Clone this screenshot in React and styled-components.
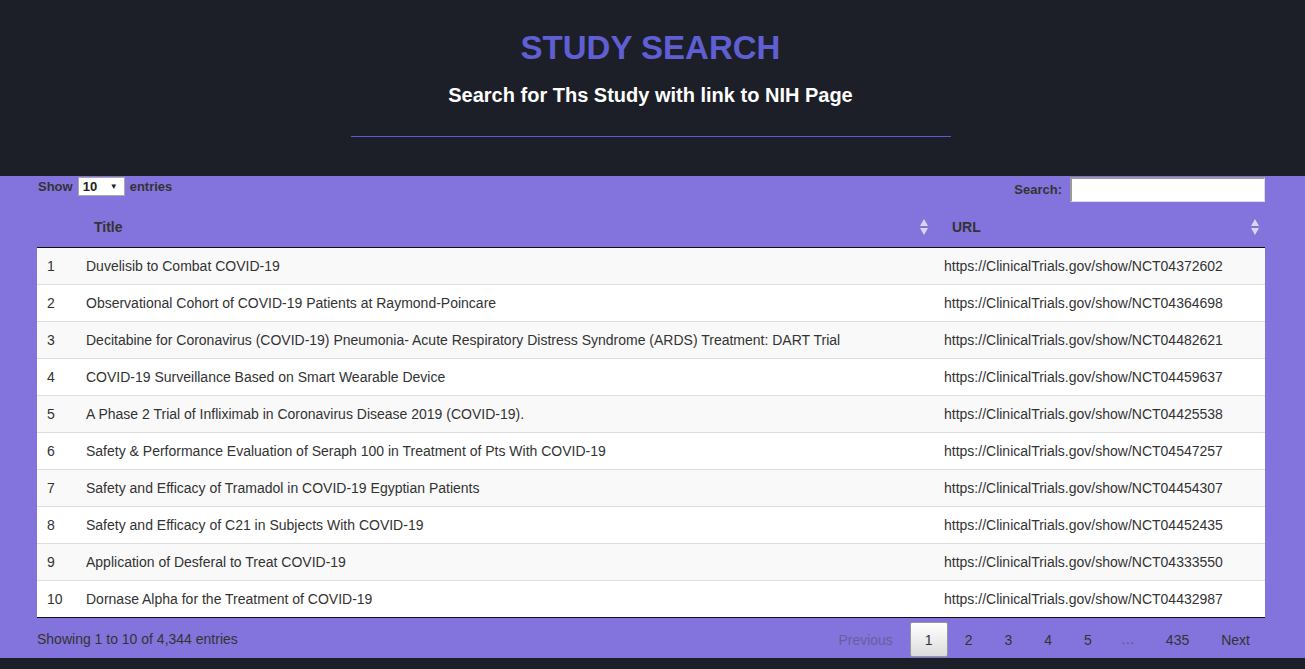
import React from 'react';
import styled, { createGlobalStyle } from 'styled-components';

const rows = [
  ['Duvelisib to Combat COVID-19', 'NCT04372602'],
  ['Observational Cohort of COVID-19 Patients at Raymond-Poincare', 'NCT04364698'],
  ['Decitabine for Coronavirus (COVID-19) Pneumonia- Acute Respiratory Distress Syndrome (ARDS) Treatment: DART Trial', 'NCT04482621'],
  ['COVID-19 Surveillance Based on Smart Wearable Device', 'NCT04459637'],
  ['A Phase 2 Trial of Infliximab in Coronavirus Disease 2019 (COVID-19).', 'NCT04425538'],
  ['Safety & Performance Evaluation of Seraph 100 in Treatment of Pts With COVID-19', 'NCT04547257'],
  ['Safety and Efficacy of Tramadol in COVID-19 Egyptian Patients', 'NCT04454307'],
  ['Safety and Efficacy of C21 in Subjects With COVID-19', 'NCT04452435'],
  ['Application of Desferal to Treat COVID-19', 'NCT04333550'],
  ['Dornase Alpha for the Treatment of COVID-19', 'NCT04432987'],
];

const pages = ['1', '2', '3', '4', '5'];

function SortIcon() {
  return (
    <SortSvg width="8" height="16" viewBox="0 0 8 16">
      <path d="M4 0 L8 7 L0 7 Z" fill="rgba(235,230,250,0.85)" />
      <path d="M4 16 L8 9 L0 9 Z" fill="rgba(235,230,250,0.85)" />
    </SortSvg>
  );
}

export default function App() {
  return (
    <>
      <GlobalStyle />
      <Header>
        <Title>STUDY SEARCH</Title>
        <Subtitle>Search for Ths Study with link to NIH Page</Subtitle>
        <Rule />
      </Header>
      <Main>
        <Controls>
          <Length>
            Show
            <FakeSelect>
              <span>10</span>
              <Caret>▼</Caret>
            </FakeSelect>
            entries
          </Length>
          <Filter>
            Search:
            <SearchInput type="text" />
          </Filter>
        </Controls>
        <Table>
          <colgroup>
            <col style={{ width: 39 }} />
            <col style={{ width: 858 }} />
            <col style={{ width: 331 }} />
          </colgroup>
          <thead>
            <tr>
              <Th></Th>
              <Th>Title<SortIcon /></Th>
              <Th>URL<SortIcon /></Th>
            </tr>
          </thead>
          <tbody>
            {rows.map((r, i) => (
              <Tr key={i} $odd={i % 2 === 0}>
                <Td>{i + 1}</Td>
                <Td>{r[0]}</Td>
                <Td>https://ClinicalTrials.gov/show/{r[1]}</Td>
              </Tr>
            ))}
          </tbody>
        </Table>
        <Footer>
          <Info>Showing 1 to 10 of 4,344 entries</Info>
          <Paginate>
            <PageButton $disabled>Previous</PageButton>
            {pages.map((p) => (
              <PageButton key={p} $current={p === '1'}>{p}</PageButton>
            ))}
            <Ellipsis>…</Ellipsis>
            <PageButton>435</PageButton>
            <PageButton>Next</PageButton>
          </Paginate>
        </Footer>
      </Main>
    </>
  );
}

const GlobalStyle = createGlobalStyle`
  html, body {
    margin: 0;
    padding: 0;
    background: #1d1f28;
    font-family: "Liberation Sans", Arial, sans-serif;
  }
`;

const Header = styled.header`
  height: 176px;
  box-sizing: border-box;
  padding: 29px 4px 0 0;
  background: #1d1f28;
  display: flex;
  flex-direction: column;
  align-items: center;
`;

const Title = styled.h1`
  margin: 0;
  font-size: 33px;
  line-height: 38px;
  font-weight: 700;
  color: #5f5fd3;
`;

const Subtitle = styled.h3`
  margin: 17px 0 0;
  font-size: 20px;
  line-height: 23px;
  font-weight: 700;
  color: #ffffff;
`;

const Rule = styled.div`
  margin-top: 29px;
  width: 600px;
  height: 1px;
  background: #5b5bd6;
`;

const Main = styled.main`
  background: #8373dc;
  padding: 1px 40px 0 37px;
  height: 482px;
  box-sizing: border-box;
  color: #333;
  font-size: 14px;
`;

const Controls = styled.div`
  display: flex;
  justify-content: space-between;
  align-items: flex-start;
  height: 24px;
`;

const Length = styled.label`
  display: flex;
  align-items: center;
  gap: 4px;
  height: 18px;
  font-size: 13px;
  font-weight: 700;
  margin-left: 1px;
`;

const FakeSelect = styled.div`
  box-sizing: border-box;
  width: 47px;
  height: 19px;
  margin: 0 1px 0 1px;
  background: #fff;
  border: 1px solid #a9a9a9;
  display: flex;
  align-items: center;
  justify-content: space-between;
  padding: 0 6px 0 4px;
  font-size: 13px;
  font-weight: 700;
  color: #222;
`;

const Caret = styled.span`
  font-size: 8px;
  color: #222;
`;

const Filter = styled.label`
  display: flex;
  align-items: center;
  gap: 8px;
  height: 24px;
  font-size: 13px;
  font-weight: 700;
`;

const SearchInput = styled.input`
  box-sizing: border-box;
  width: 195px;
  height: 25px;
  margin: 0;
  background: #fff;
  border: 1px solid #dcdcdc;
  border-top: 2px solid #9a9a9a;
  border-left: 2px solid #9a9a9a;
  outline: none;
`;

const Table = styled.table`
  width: 1228px;
  margin-top: 6px;
  border-collapse: collapse;
  table-layout: fixed;
  border-bottom: 1px solid #111;

  tbody tr:first-child td {
    border-top: none;
  }
`;

const Th = styled.th`
  position: relative;
  height: 40px;
  box-sizing: border-box;
  padding: 10px 18px;
  text-align: left;
  font-size: 14px;
  font-weight: 700;
  color: #333;
  border-bottom: 1px solid #111;
`;

const SortSvg = styled.svg`
  position: absolute;
  right: 6px;
  top: 12px;
`;

const Tr = styled.tr`
  background: ${(p) => (p.$odd ? '#f9f9f9' : '#ffffff')};
`;

const Td = styled.td`
  height: 36px;
  box-sizing: content-box;
  padding: 0 10px;
  border-top: 1px solid #ddd;
  font-size: 14px;
  color: #333;
  white-space: nowrap;
  overflow: hidden;
`;

const Footer = styled.div`
  display: flex;
  justify-content: space-between;
  align-items: flex-start;
`;

const Info = styled.div`
  padding-top: 13px;
  font-size: 14px;
  color: #333;
`;

const Paginate = styled.div`
  display: flex;
  padding-top: 4px;
`;

const PageButton = styled.span`
  box-sizing: border-box;
  min-width: 21px;
  height: 35px;
  padding: 8px 14px 6px;
  margin-left: 2px;
  border: 1px solid ${(p) => (p.$current ? '#979797' : 'transparent')};
  border-radius: 2px;
  font-size: 14px;
  line-height: 19px;
  text-align: center;
  color: ${(p) => (p.$disabled ? '#66619a' : '#333')};
  background: ${(p) => (p.$current ? 'linear-gradient(to bottom, #fff 0%, #dcdcdc 100%)' : 'transparent')};
`;

const Ellipsis = styled.span`
  padding: 8px 14px 6px;
  line-height: 19px;
  color: #5a5290;
`;
